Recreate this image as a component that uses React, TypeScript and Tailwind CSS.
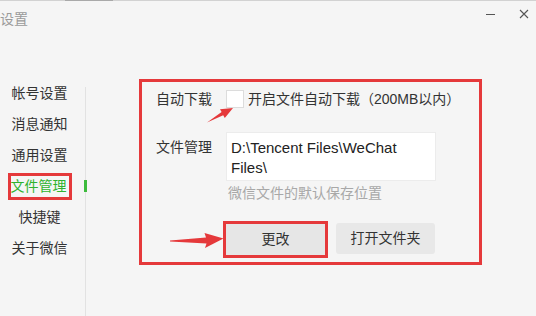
import React from "react";

const MENU = ["帐号设置", "消息通知", "通用设置", "文件管理", "快捷键", "关于微信"];
const ACTIVE = "文件管理";

function Sidebar() {
  return (
    <div className="flex w-[79px] flex-col">
      {MENU.map((item) => (
        <div key={item} className="flex h-[31px] items-center justify-center">
          {item === ACTIVE ? (
            <span className="inline-block pr-[2px] leading-[21px] text-[#2fb32f] outline-[3px] outline-solid outline-[#e5393b]">
              {item}
            </span>
          ) : (
            <span className="text-[#333]">{item}</span>
          )}
        </div>
      ))}
    </div>
  );
}

function Arrows() {
  return (
    <svg
      className="pointer-events-none absolute left-0 top-0"
      width="536"
      height="316"
      viewBox="0 0 536 316"
    >
      <polygon
        points="207,122.5 221.6,112.1 220,109.3 233,108 224.8,118.1 223.2,115.3"
        fill="#e5393b"
      />
      <polygon
        points="170,240.6 206,237.4 204.5,233 223.5,238.5 205,248 206.5,243.6 170,241.6"
        fill="#e5393b"
      />
    </svg>
  );
}

export default function App() {
  return (
    <div
      className="relative h-[316px] w-[536px] overflow-hidden bg-[#f5f5f5] text-[14px]"
      style={{ fontFamily: '"Liberation Sans", "Noto Sans CJK SC", sans-serif' }}
    >
      <div className="flex h-px">
        <div className="w-[65px] bg-[#d2d2d2]" />
        <div className="w-[48px] bg-[#a9a9a9]" />
        <div className="flex-1 bg-[#d2d2d2]" />
      </div>

      <div className="flex h-[77px] items-start justify-between">
        <span className="mt-[8px] leading-[20px] text-[#9a9a9a]">设置</span>
        <div className="mt-[8px] flex items-center">
          <svg width="10" height="10" viewBox="0 0 10 10" className="mr-[23px]">
            <line x1="0" y1="5.5" x2="9" y2="5.5" stroke="#555" strokeWidth="1" />
          </svg>
          <svg width="10" height="10" viewBox="0 0 10 10" className="mr-[7px]">
            <path d="M1 1 L9 9 M9 1 L1 9" stroke="#555" strokeWidth="1.1" />
          </svg>
        </div>
      </div>

      <div className="flex">
        <Sidebar />
        <div className="ml-[6px] mt-[9px] h-[229px] w-px bg-[#e2e2e2] relative">
          <div className="absolute left-[-1px] top-[93px] h-[12px] w-[3px] bg-[#3dbb3d]" />
        </div>

        <div className="ml-[53px] mt-px flex h-[186px] w-[343px] flex-col border-[3px] border-[#e5393b] pl-[14px] pt-[8px] text-[#333]">
          <div className="flex h-[18px] items-center">
            <span className="w-[70px]">自动下载</span>
            <span className="h-[18px] w-[18px] border border-[#dcdcdc] bg-white" />
            <span className="ml-[4px]">开启文件自动下载（200MB以内）</span>
          </div>

          <div className="mt-[24px] flex">
            <span className="w-[70px] pt-[5px] leading-[20px]">文件管理</span>
            <div className="flex flex-col">
              <div className="h-[49px] w-[210px] border border-[#ececec] bg-white pl-[4px] pt-[5px] text-[15px] leading-[20px] text-[#222]">
                <div>D:\Tencent Files\WeChat</div>
                <div>Files\</div>
              </div>
              <span className="mt-[2px] pl-[2px] leading-[20px] text-[#a8a8a8]">微信文件的默认保存位置</span>
            </div>
          </div>

          <div className="ml-[70px] mt-[21px] flex items-center">
            <button className="h-[31px] w-[99px] bg-[#e6e6e6] text-[#333] outline-[3px] outline-solid outline-[#e5393b]">
              更改
            </button>
            <button className="ml-[11px] h-[31px] w-[99px] -translate-y-[1px] rounded-[3px] bg-[#e8e8e8] text-[#333]">
              打开文件夹
            </button>
          </div>
        </div>
      </div>

      <Arrows />
    </div>
  );
}
